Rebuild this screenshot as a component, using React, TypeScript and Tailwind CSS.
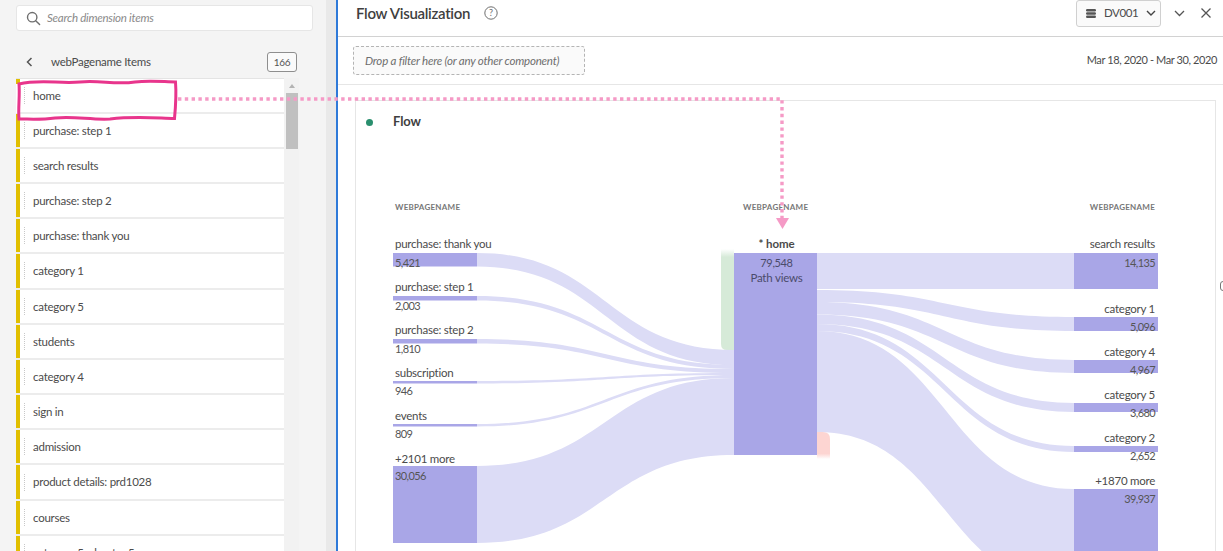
const font = { fontFamily: "Lato, 'Open Sans', sans-serif" };

const items = [
  "home",
  "purchase: step 1",
  "search results",
  "purchase: step 2",
  "purchase: thank you",
  "category 1",
  "category 5",
  "students",
  "category 4",
  "sign in",
  "admission",
  "product details: prd1028",
  "courses",
  "category 5: chapter 5",
];

// source nodes on the left side of the flow
const leftNodes = [
  { label: "purchase: thank you", value: "5,421", y: 253, h: 13.5, top: 237 },
  { label: "purchase: step 1", value: "2,003", y: 296, h: 4.5, top: 280 },
  { label: "purchase: step 2", value: "1,810", y: 339, h: 4.5, top: 323 },
  { label: "subscription", value: "946", y: 381, h: 2.5, top: 366 },
  { label: "events", value: "809", y: 424, h: 2.5, top: 409 },
  { label: "+2101 more", value: "30,056", y: 466, h: 77, top: 452 },
];

const rightNodes = [
  { label: "search results", value: "14,135", y: 253, h: 36, top: 237 },
  { label: "category 1", value: "5,096", y: 317, h: 14, top: 302 },
  { label: "category 4", value: "4,967", y: 360, h: 13, top: 345 },
  { label: "category 5", value: "3,680", y: 403, h: 9, top: 388 },
  { label: "category 2", value: "2,652", y: 446, h: 6, top: 431 },
  { label: "+1870 more", value: "39,937", y: 489, h: 100, top: 474 },
];

const leftBands = [
  { y1: 253, y2: 266.5, t1: 350, t2: 365 },
  { y1: 296, y2: 300.5, t1: 365, t2: 369 },
  { y1: 339, y2: 343.5, t1: 369, t2: 373 },
  { y1: 381, y2: 383.5, t1: 373, t2: 375 },
  { y1: 424, y2: 426.5, t1: 375, t2: 378 },
  { y1: 466, y2: 543, t1: 378, t2: 455 },
];

const rightBands = [
  { s1: 253, s2: 289, y1: 253, y2: 289 },
  { s1: 290, s2: 302, y1: 317, y2: 331 },
  { s1: 302, s2: 314.5, y1: 360, y2: 373 },
  { s1: 314.5, s2: 324, y1: 403, y2: 412 },
  { s1: 324, s2: 331, y1: 446, y2: 452 },
  { s1: 331, s2: 432, y1: 489, y2: 589 },
];

function band(x1: number, x2: number, a1: number, a2: number, b1: number, b2: number) {
  const m = (x1 + x2) / 2;
  return `M${x1} ${a1} C${m} ${a1} ${m} ${b1} ${x2} ${b1} L${x2} ${b2} C${m} ${b2} ${m} ${a2} ${x1} ${a2} Z`;
}

function SidebarRow({ name, first }: { name: string; first?: boolean }) {
  return (
    <div className={`flex shrink-0 items-center border-b-2 border-[#ececec] bg-white ${first ? "h-[34.6px]" : "h-[35.2px]"}`}>
      <div className="h-full w-[4px] shrink-0 bg-[#e1bf00]">
        {first && <div className="mt-[5px] h-[29px] bg-white" />}
      </div>
      <div className="ml-[4px] h-[17px] w-0 border-l border-dotted border-[#c8c8c8]" />
      <span className="ml-[8px] whitespace-pre text-[11.5px] tracking-[-0.25px] text-[#4b4b4b]">{name}</span>
    </div>
  );
}

function Sidebar() {
  return (
    <aside className="flex h-full w-[326px] shrink-0 flex-col bg-[#f4f4f4] pl-[16px]">
      <div className="mt-[5px] flex h-[26px] w-[297px] items-center rounded-[3px] border border-[#e6e6e6] bg-white pl-[9px]">
        <svg width="15" height="15" viewBox="0 0 15 15" fill="none" stroke="#6e6e6e" strokeWidth="1.4">
          <circle cx="6.2" cy="6.2" r="4.7" />
          <path d="M9.7 9.7 L13.6 13.6" strokeLinecap="round" />
        </svg>
        <span className="ml-[6px] text-[11.5px] italic tracking-[-0.25px] text-[#8a8a8a]">Search dimension items</span>
      </div>
      <div className="mt-[21px] flex h-[20px] w-[281px] items-center">
        <svg className="ml-[9px]" width="9" height="10" viewBox="0 0 9 10" fill="none" stroke="#555" strokeWidth="1.5">
          <path d="M6.5 1 L2.5 5 L6.5 9" />
        </svg>
        <span className="ml-[17px] text-[11.5px] tracking-[-0.25px] text-[#4b4b4b]">webPagename Items</span>
        <span className="ml-auto flex h-[20px] w-[30px] items-center justify-center rounded-[3px] border border-[#8e8e8e] bg-[#fafafa] text-[10px] tracking-[-0.3px] text-[#555]">
          166
        </span>
      </div>
      <div className="mt-[6px] flex min-h-0 flex-1 overflow-hidden">
        <div className="flex w-[268px] shrink-0 flex-col border-t border-[#e4e4e4]">
          {items.map((name, i) => (
            <SidebarRow key={name} name={name} first={i === 0} />
          ))}
        </div>
        <div className="relative h-full w-[15px] bg-[#f2f2f2]">
          <div className="absolute left-[5px] top-[6px] h-0 w-0 border-x-[3px] border-b-[4px] border-x-transparent border-b-[#b3b3b3]" />
          <div className="ml-[2px] mt-[15px] h-[56px] w-[12px] bg-[#c0c0c0]" />
        </div>
      </div>
    </aside>
  );
}

function Header() {
  return (
    <>
      <div className="flex h-[37px] shrink-0 items-center border-b border-[#d2d2d2] pb-[10px] pl-[18px] pr-[12px]">
        <span className="text-[15px] font-semibold tracking-[-0.3px] text-[#3f3f3f]">Flow Visualization</span>
        <svg className="ml-[14px]" width="14" height="14" viewBox="0 0 14 14" fill="none">
          <circle cx="7" cy="7" r="6.2" stroke="#6e6e6e" />
          <text x="7" y="10" textAnchor="middle" fontSize="9" fill="#6e6e6e" style={font}>?</text>
        </svg>
        <div className="ml-auto flex h-[27px] w-[85px] items-center rounded-[3px] border border-[#d0d0d0] bg-[#fafafa] pl-[9px]">
          <svg width="10" height="9" viewBox="0 0 10 9" fill="#555">
            <rect x="0" y="0" width="10" height="2.4" rx="1.2" />
            <rect x="0" y="3.3" width="10" height="2.4" rx="1.2" />
            <rect x="0" y="6.6" width="10" height="2.4" rx="1.2" />
          </svg>
          <span className="ml-[8px] text-[11.5px] tracking-[-0.4px] text-[#4b4b4b]">DV001</span>
          <svg className="ml-[8px]" width="10" height="6" viewBox="0 0 10 6" fill="none" stroke="#444" strokeWidth="1.4">
            <path d="M1 1 L5 5 L9 1" />
          </svg>
        </div>
        <svg className="ml-[13px]" width="11" height="7" viewBox="0 0 11 7" fill="none" stroke="#555" strokeWidth="1.3">
          <path d="M1 1 L5.5 5.5 L10 1" />
        </svg>
        <svg className="ml-[16px]" width="10" height="10" viewBox="0 0 10 10" fill="none" stroke="#555" strokeWidth="1.3">
          <path d="M0.5 0.5 L9.5 9.5 M9.5 0.5 L0.5 9.5" />
        </svg>
      </div>
      <div className="flex h-[48px] shrink-0 items-center justify-between border-b border-[#e6e6e6] pl-[15px] pr-[6px]">
        <div className="flex h-[29px] w-[232px] items-center rounded-[3px] border border-dashed border-[#b4b4b4] bg-[#fafafa] pl-[11px] text-[11.5px] italic tracking-[-0.2px] text-[#6e6e6e]">
          Drop a filter here (or any other component)
        </div>
        <span className="text-[11px] tracking-[-0.4px] text-[#4b4b4b]">Mar 18, 2020 - Mar 30, 2020</span>
      </div>
    </>
  );
}

function NodeLabel({ node, side }: { node: { label: string; value: string; y: number; top: number }; side: "left" | "right" }) {
  const pos = side === "left" ? "left-[395px] text-left" : "left-[1000px] w-[155px] text-right";
  return (
    <>
      <div className={`absolute whitespace-nowrap text-[11.5px] leading-[14px] tracking-[-0.25px] text-[#4b4b4b] ${pos}`} style={{ top: node.top }}>
        {node.label}
      </div>
      <div className={`absolute whitespace-nowrap text-[11px] leading-[14px] tracking-[-0.6px] text-[#555] ${pos}`} style={{ top: node.y + 3 }}>
        {node.value}
      </div>
    </>
  );
}

function FlowChart() {
  return (
    <div className="pointer-events-none absolute inset-0 overflow-hidden">
      <svg className="absolute left-0 top-0" width="1223" height="551" viewBox="0 0 1223 551">
        {/* exit / entry tabs behind the center node */}
        <defs>
          <linearGradient id="greenTab" x1="0" y1="0" x2="0" y2="1">
            <stop offset="0" stopColor="#ffffff" />
            <stop offset="0.08" stopColor="#d6ead8" />
          </linearGradient>
          <linearGradient id="redTab" x1="0" y1="0" x2="0" y2="1">
            <stop offset="0.8" stopColor="#fdd5d2" />
            <stop offset="1" stopColor="#ffffff" />
          </linearGradient>
        </defs>
        <path d="M721 249 H734 V350 H727 Q721 350 721 344 Z" fill="url(#greenTab)" />
        <path d="M817 432 H823 Q830 432 830 439 V459 H817 Z" fill="url(#redTab)" />

        {leftBands.map((b) => (
          <path key={b.y1} d={band(477, 734, b.y1, b.y2, b.t1, b.t2)} fill="#dcdcf6" />
        ))}
        {rightBands.map((b) => (
          <path key={b.y1} d={band(817, 1074, b.s1, b.s2, b.y1, b.y2)} fill="#dcdcf6" />
        ))}

        {leftNodes.map((n) => (
          <rect key={n.label} x="393" y={n.y} width="84" height={n.h} fill="#a9a6e7" />
        ))}
        <rect x="734" y="253" width="83" height="202" fill="#a9a6e7" />
        {rightNodes.map((n) => (
          <rect key={n.label} x="1074" y={n.y} width="84" height={n.h} fill="#a9a6e7" />
        ))}
      </svg>

      <div className="absolute left-[395px] top-[201px] text-[8px] font-bold leading-[12px] tracking-[0.25px] text-[#777]">WEBPAGENAME</div>
      <div className="absolute left-[743px] top-[201px] text-[8px] font-bold leading-[12px] tracking-[0.25px] text-[#777]">WEBPAGENAME</div>
      <div className="absolute left-[1000px] top-[201px] w-[155px] text-right text-[8px] font-bold leading-[12px] tracking-[0.25px] text-[#777]">WEBPAGENAME</div>

      {leftNodes.map((n) => (
        <NodeLabel key={n.label} node={n} side="left" />
      ))}
      {rightNodes.map((n) => (
        <NodeLabel key={n.label} node={n} side="right" />
      ))}

      <div className="absolute left-[734px] top-[237px] w-[85px] text-center text-[11.5px] font-bold leading-[14px] tracking-[-0.1px] text-[#4b4b4b]">* home</div>
      <div className="absolute left-[734px] top-[256px] w-[85px] text-center text-[11px] leading-[14.5px] tracking-[-0.35px] text-[#4b4b6b]">
        79,548
        <br />
        <span className="text-[11.5px] tracking-[-0.2px]">Path views</span>
      </div>
    </div>
  );
}

function Annotation() {
  return (
    <svg className="pointer-events-none absolute left-0 top-0" width="1223" height="551" viewBox="0 0 1223 551" fill="none">
      <path
        d="M19 84 C40 79 60 84 80 82 C100 80 115 85 135 82 C150 80 165 82 175.5 82 C176.5 95 175.5 108 174.5 118.5 C155 118 135 116 110 119 C90 120 75 116 55 118 C40 120 30 119 19 119 C18 108 20 95 19 84 Z"
        stroke="#e8358c"
        strokeWidth="3"
      />
      <path d="M178 99 H782 V218" stroke="#f59ac6" strokeWidth="3.4" strokeDasharray="3.4 3.4" />
      <path d="M776 218 H789 L782.5 229 Z" fill="#f59ac6" />
    </svg>
  );
}

export default function App() {
  return (
    <div className="relative flex h-[551px] w-[1223px] overflow-hidden bg-white" style={font}>
      <Sidebar />
      <div className="h-full w-[10px] shrink-0 bg-[#e9e9e9]" />
      <div className="h-full w-[2px] shrink-0 bg-[#2f7ad9]" />
      <main className="flex h-full min-w-0 flex-1 flex-col bg-white">
        <Header />
        <div className="flex-1 pl-[17px] pt-[15px]">
          <div className="h-[600px] w-[861px] border border-[#e6e6e6]">
            <div className="flex h-[42px] items-center pl-[10px]">
              <div className="h-[7px] w-[7px] rounded-full bg-[#2a8f6e]" />
              <span className="ml-[20px] text-[13px] font-bold tracking-[-0.1px] text-[#3f3f3f]">Flow</span>
            </div>
          </div>
        </div>
      </main>
      <FlowChart />
      <Annotation />
      <div className="absolute left-[1220px] top-[281px] h-[10px] w-[6px] rounded-full border border-[#777]" />
    </div>
  );
}
